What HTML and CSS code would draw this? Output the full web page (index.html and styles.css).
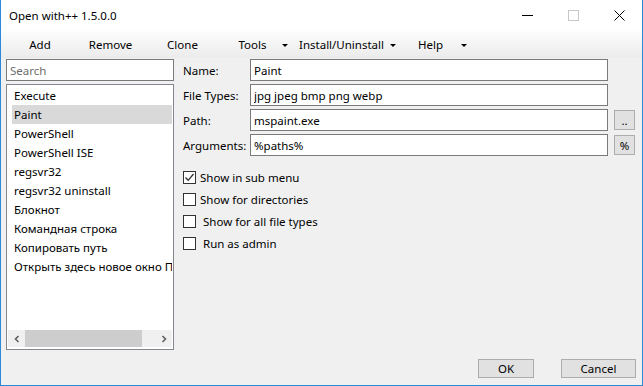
FILE: index.html
```html
<!DOCTYPE html>
<html lang="en">
<head>
    <meta charset="UTF-8">
    <title>Open with++</title>
    <link rel="stylesheet" href="styles.css">
</head>
<body>
    <div class="window">
        <div class="titlebar">
            <span class="title">Open with++ 1.5.0.0</span>
            <div class="caption">
                <span class="cap"><svg width="11" height="11" viewBox="0 0 11 11"><line x1="0" y1="5.5" x2="11" y2="5.5" stroke="#000" stroke-width="1"/></svg></span>
                <span class="cap"><svg width="11" height="11" viewBox="0 0 11 11"><rect x="0.5" y="0.5" width="10" height="10" fill="none" stroke="#c8c8c8" stroke-width="1"/></svg></span>
                <span class="cap"><svg width="11" height="11" viewBox="0 0 11 11"><path d="M0.5 0.5 L10.5 10.5 M10.5 0.5 L0.5 10.5" stroke="#000" stroke-width="1"/></svg></span>
            </div>
        </div>

        <div class="menubar">
            <span class="menu m-add">Add</span>
            <span class="menu m-remove">Remove</span>
            <span class="menu m-clone">Clone</span>
            <span class="menu m-tools">Tools</span>
            <span class="arrow a-tools"></span>
            <span class="menu m-install">Install/Uninstall</span>
            <span class="arrow a-install"></span>
            <span class="menu m-help">Help</span>
            <span class="arrow a-help"></span>
        </div>

        <div class="main">
            <div class="sidebar">
                <input type="text" class="search" placeholder="Search">
                <div class="listbox">
                    <div class="items">
                        <div class="item">Execute</div>
                        <div class="item selected">Paint</div>
                        <div class="item">PowerShell</div>
                        <div class="item">PowerShell ISE</div>
                        <div class="item">regsvr32</div>
                        <div class="item">regsvr32 uninstall</div>
                        <div class="item">Блокнот</div>
                        <div class="item">Командная строка</div>
                        <div class="item">Копировать путь</div>
                        <div class="item">Открыть здесь новое окно Проводника</div>
                    </div>
                    <div class="hscroll">
                        <span class="sarrow"><svg width="8" height="8" viewBox="0 0 8 8"><path d="M5.5 1 L2.5 4 L5.5 7" fill="none" stroke="#606060" stroke-width="1.6"/></svg></span>
                        <div class="track"><div class="thumb"></div></div>
                        <span class="sarrow"><svg width="8" height="8" viewBox="0 0 8 8"><path d="M2.5 1 L5.5 4 L2.5 7" fill="none" stroke="#606060" stroke-width="1.6"/></svg></span>
                    </div>
                </div>
            </div>

            <div class="editor">
                <div class="fields">
                    <label>Name:</label>
                    <input type="text" class="field" value="Paint">
                    <span></span>
                    <label>File Types:</label>
                    <input type="text" class="field" value="jpg jpeg bmp png webp">
                    <span></span>
                    <label>Path:</label>
                    <input type="text" class="field" value="mspaint.exe">
                    <button class="small">..</button>
                    <label>Arguments:</label>
                    <input type="text" class="field" value="%paths%">
                    <button class="small">%</button>
                </div>

                <div class="checks">
                    <div class="check"><span class="box checked"><svg width="11" height="11" viewBox="0 0 11 11"><path d="M1.5 5.5 L4.2 8.3 L9.5 2" fill="none" stroke="#333" stroke-width="1.3"/></svg></span><span>Show in sub menu</span></div>
                    <div class="check"><span class="box"></span><span>Show for directories</span></div>
                    <div class="check wide"><span class="box"></span><span>Show for all file types</span></div>
                    <div class="check wide"><span class="box"></span><span>Run as admin</span></div>
                </div>

                <div class="footer">
                    <button class="btn ok">OK</button>
                    <button class="btn cancel">Cancel</button>
                </div>
            </div>
        </div>
    </div>
</body>
</html>
```

FILE: styles.css
```css
body {
    margin: 0;
    padding: 0;
    font-family: "Noto Sans", sans-serif;
    font-size: 11.5px;
    color: #000;
}

.window {
    width: 643px;
    height: 386px;
    box-sizing: border-box;
    border: 1px solid #2a8ad8;
    border-top: none;
    background-color: #f0f0f0;
    display: flex;
    flex-direction: column;
    overflow: hidden;
}

.titlebar {
    height: 31px;
    background-color: #fff;
    display: flex;
    align-items: center;
}

.title {
    padding-left: 8px;
    flex: 1;
}

.caption {
    display: flex;
    height: 31px;
}

.cap {
    width: 46px;
    display: flex;
    align-items: center;
    justify-content: center;
}

.menubar {
    height: 27px;
    background: linear-gradient(#fdfdfd, #ebebeb);
    display: flex;
    align-items: center;
}

.menu {
    text-align: center;
    white-space: nowrap;
}

.m-add { margin-left: 19px; width: 40px; }
.m-remove { margin-left: 21px; width: 59px; }
.m-clone { margin-left: 21px; width: 43px; }
.m-tools { margin-left: 27px; width: 43px; }
.m-install { margin-left: 5px; width: 91px; }
.m-help { margin-left: 10px; width: 43px; }

.arrow {
    width: 12px;
    height: 12px;
    position: relative;
}

.arrow::after {
    content: "";
    position: absolute;
    left: 3px;
    top: 5px;
    border-left: 3px solid transparent;
    border-right: 3px solid transparent;
    border-top: 3px solid #000;
}

.a-tools { margin-left: 5px; }
.a-install { margin-left: 0; }
.a-help { margin-left: 6px; }

.main {
    flex: 1;
    display: flex;
    min-height: 0;
}

.sidebar {
    width: 168px;
    flex-shrink: 0;
    padding-left: 5px;
    padding-top: 1px;
    display: flex;
    flex-direction: column;
    gap: 3px;
}

.search, .field {
    box-sizing: border-box;
    height: 22px;
    border: 1px solid #7a7a7a;
    background-color: #fff;
    font-family: inherit;
    font-size: 11.5px;
    padding: 0 3px;
    margin: 0;
    outline: none;
    color: #000;
    min-width: 0;
}

.search::placeholder {
    color: #6d6d6d;
}

.listbox {
    height: 266px;
    box-sizing: border-box;
    border: 1px solid #828790;
    background-color: #fff;
    display: flex;
    flex-direction: column;
    overflow: hidden;
}

.items {
    flex: 1 1 auto;
    min-height: 0;
    padding: 1px 1px 0 5px;
    overflow: hidden;
}

.item {
    height: 19px;
    line-height: 19px;
    padding-left: 2px;
    white-space: nowrap;
    overflow: hidden;
}

.item.selected {
    background-color: #d9d9d9;
}

.hscroll {
    flex-shrink: 0;
    height: 17px;
    margin: 0 1px 2px 1px;
    background-color: #f0f0f0;
    display: flex;
    align-items: center;
}

.sarrow {
    width: 17px;
    height: 17px;
    display: flex;
    align-items: center;
    justify-content: center;
}

.track {
    flex: 1;
    height: 17px;
}

.thumb {
    width: 117px;
    height: 17px;
    background-color: #cdcdcd;
}

.editor {
    flex: 1;
    padding: 1px 6px 7px 9px;
    display: flex;
    flex-direction: column;
}

.fields {
    display: grid;
    grid-template-columns: 61px 358px 21px;
    grid-auto-rows: 22px;
    column-gap: 6px;
    row-gap: 3px;
    align-items: center;
}

.fields label {
    white-space: nowrap;
}

.small {
    height: 20px;
    width: 21px;
    padding: 0;
    border: 1px solid #adadad;
    background-color: #e1e1e1;
    font-family: inherit;
    font-size: 11.5px;
    color: #000;
}

.checks {
    margin-top: 10px;
    display: flex;
    flex-direction: column;
}

.check {
    height: 22px;
    display: flex;
    align-items: center;
    gap: 4px;
}

.check.wide {
    gap: 7px;
}

.box {
    width: 13px;
    height: 13px;
    box-sizing: border-box;
    border: 1px solid #333;
    background-color: #fff;
    display: flex;
    align-items: center;
    justify-content: center;
}

.footer {
    margin-top: auto;
    display: flex;
    justify-content: flex-end;
    gap: 27px;
}

.btn {
    height: 19px;
    padding: 0;
    border: 1px solid #adadad;
    background-color: #e1e1e1;
    font-family: inherit;
    font-size: 11.5px;
    color: #000;
}

.ok { width: 56px; }
.cancel { width: 75px; }
```
